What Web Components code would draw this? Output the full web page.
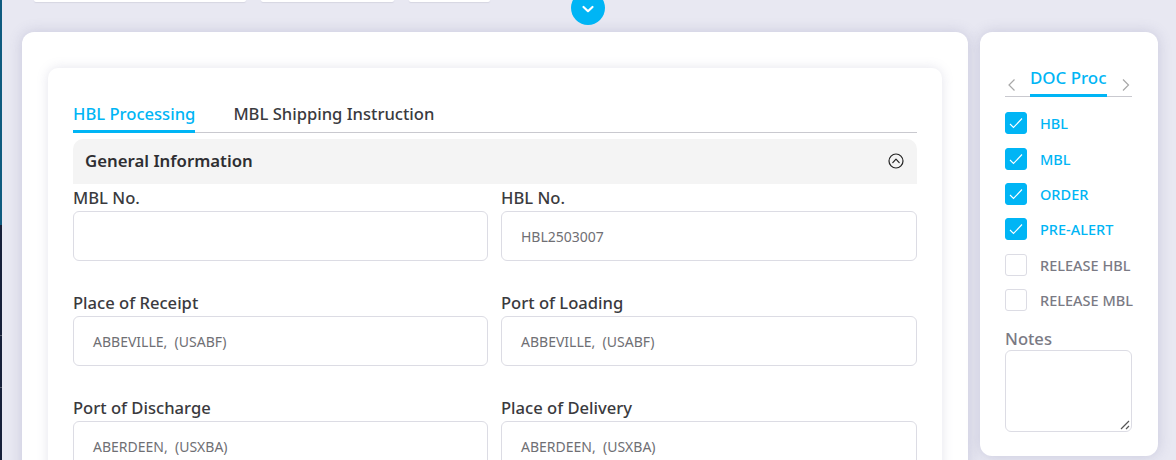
<!DOCTYPE html>
<html><head><meta charset="utf-8">
<style>
html,body{margin:0;height:460px;overflow:hidden;background:#e8e8f2;}
body{font-family:"Noto Sans","Open Sans",sans-serif;}
app-shell{display:block;}
</style></head><body>
<app-shell>
  <top-bar slot="top"></top-bar>
  <main-card slot="main">
    <tab-strip></tab-strip>
    <section-head>General Information</section-head>
    <field-grid>
      <form-field label="MBL No."></form-field>
      <form-field label="HBL No." value="HBL2503007"></form-field>
      <form-field label="Place of Receipt" value="ABBEVILLE,  (USABF)"></form-field>
      <form-field label="Port of Loading" value="ABBEVILLE,  (USABF)"></form-field>
      <form-field label="Port of Discharge" value="ABERDEEN,  (USXBA)"></form-field>
      <form-field label="Place of Delivery" value="ABERDEEN,  (USXBA)"></form-field>
    </field-grid>
  </main-card>
  <side-card slot="side">
    <check-row checked>HBL</check-row>
    <check-row checked>MBL</check-row>
    <check-row checked>ORDER</check-row>
    <check-row checked>PRE-ALERT</check-row>
    <check-row>RELEASE HBL</check-row>
    <check-row>RELEASE MBL</check-row>
  </side-card>
</app-shell>
<script>
function def(name,html,init){
  customElements.define(name,class extends HTMLElement{
    constructor(){super();this.attachShadow({mode:'open'}).innerHTML=html;}
    connectedCallback(){if(init)init(this);}
  });
}
def('app-shell',`<style>
:host{display:block;height:460px;overflow:hidden;position:relative;}
.strip{position:absolute;left:0;top:0;bottom:0;width:2px;background:linear-gradient(#0f5b80 0,#0f5b80 225px,#16203a 225px,#16203a 335px,#555a6a 335px,#555a6a 336px,#16203a 336px,#16203a 387px,#555a6a 387px,#555a6a 388px,#16203a 388px);}
.row{display:flex;gap:12px;padding:0 18px 0 22px;align-items:flex-start;}
</style>
<div class="strip"></div>
<slot name="top"></slot>
<div class="row"><slot name="main"></slot><slot name="side"></slot></div>`);
def('top-bar',`<style>
:host{display:flex;height:32px;padding-left:34px;gap:15px;position:relative;}
i{display:block;height:2px;background:#fff;border-radius:0 0 4px 4px;box-shadow:0 1px 1px #d6d6e2;}
.go{position:absolute;left:571px;top:-9px;width:34px;height:34px;border-radius:50%;background:#00b5f5;display:flex;align-items:center;justify-content:center;}
</style>
<i style="width:212px"></i><i style="width:133px"></i><i style="width:81px"></i>
<div class="go"><svg width="14" height="10" viewBox="0 0 14 10" fill="none" stroke="#fff" stroke-width="2.2" stroke-linecap="round" stroke-linejoin="round" style="margin-top:1px"><path d="M2.5 3 7 7.2 11.5 3"/></svg></div>`);
def('main-card',`<style>
:host{display:block;box-sizing:border-box;width:946px;height:600px;flex:none;background:#fff;border-radius:12px;padding:36px 26px;box-shadow:0 0 14px rgba(100,100,150,.24);}
.in{background:#fff;border-radius:10px;padding:26px 25px;box-shadow:0 0 12px rgba(120,120,160,.2);height:500px;}
</style><div class="in"><slot></slot></div>`);
def('tab-strip',`<style>
:host{display:flex;gap:38px;height:39px;border-bottom:1px solid #c9c9cf;box-sizing:border-box;font-size:16.6px;font-weight:500;color:#3a3a3e;}
span{height:39px;box-sizing:border-box;padding-top:8px;line-height:24px;}
.a{color:#00b5f5;border-bottom:3px solid #00b5f5;}
</style><span class="a">HBL Processing</span><span>MBL Shipping Instruction</span>`);
def('section-head',`<style>
:host{display:flex;justify-content:space-between;align-items:center;height:45px;box-sizing:border-box;margin-top:6px;padding:0 13px 2px 12px;background:#f4f4f4;border-radius:10px 10px 0 0;font-size:16.8px;font-weight:600;color:#2e2e32;}
svg{margin-top:1px;}
</style><slot></slot><svg width="16" height="16" viewBox="0 0 16 16" fill="none" stroke="#222" stroke-width="1.2"><circle cx="8" cy="8" r="7"/><path d="M4.8 9.6 8 6.2l3.2 3.4" stroke-linecap="round" stroke-linejoin="round"/></svg>`);
def('field-grid',`<style>
:host{display:grid;grid-template-columns:415px 416px;column-gap:13px;row-gap:28px;}
</style><slot></slot>`);
def('form-field',`<style>
:host{display:block;}
label{display:block;font-size:16.6px;font-weight:500;color:#3a3a3e;line-height:27px;height:27px;}
.box{box-sizing:border-box;height:50px;border:1px solid #dcdce4;border-radius:6px;padding:0 19px;line-height:50px;font-size:14px;color:#6f6f74;white-space:pre;}
</style><label></label><div class="box"></div>`,el=>{
  el.shadowRoot.querySelector('label').textContent=el.getAttribute('label');
  el.shadowRoot.querySelector('.box').textContent=el.getAttribute('value')||'';
});
def('side-card',`<style>
:host{display:block;box-sizing:border-box;width:178px;height:424px;flex:none;background:#fff;border-radius:12px;padding:36px 26px 0 25px;box-shadow:0 0 14px rgba(100,100,150,.24);}
.tabs{display:flex;justify-content:space-between;height:29px;border-bottom:1px solid #c9c9cf;box-sizing:border-box;margin-bottom:8.6px;}
.t{height:29px;box-sizing:border-box;width:77px;border-bottom:3px solid #00b5f5;color:#00b5f5;font-size:16.9px;font-weight:500;line-height:20px;white-space:nowrap;}
svg{margin-top:10px;}
.n{font-size:16.6px;font-weight:500;color:#7a7a84;line-height:24px;height:23px;margin-top:9.4px;}
.ta{box-sizing:border-box;height:82px;border:1px solid #dcdce4;border-radius:6px;position:relative;}
.ta svg{position:absolute;right:1px;bottom:1px;margin:0;}
</style>
<div class="tabs">
<svg width="12" height="14" viewBox="0 0 12 14" fill="none" stroke="#a8a8a8" stroke-width="1.2"><path d="M9.5 1.5 4 7l5.5 5.5"/></svg>
<div class="t">DOC Proc</div>
<svg width="12" height="14" viewBox="0 0 12 14" fill="none" stroke="#a8a8a8" stroke-width="1.2"><path d="M3 1.5 8.5 7 3 12.5"/></svg>
</div>
<slot></slot>
<div class="n">Notes</div>
<div class="ta"><svg width="10" height="10" viewBox="0 0 10 10" stroke="#555" stroke-width="1.2" fill="none"><path d="M1 9 9 1M6 9 9 6"/></svg></div>`);
def('check-row',`<style>
:host{display:flex;align-items:center;gap:13px;height:35.4px;font-size:14.5px;font-weight:500;color:#7a7a84;white-space:nowrap;}
:host([checked]){color:#00b5f5;}
.b{box-sizing:border-box;width:22px;height:22px;border-radius:3px;border:1px solid #dcdce4;background:#fff;display:flex;align-items:center;justify-content:center;flex:none;}
:host([checked]) .b{background:#00b5f5;border-color:#00b5f5;}
svg{display:none;}
:host([checked]) svg{display:block;}
</style><div class="b"><svg width="14" height="12" viewBox="0 0 14 12" fill="none" stroke="#fff" stroke-width="1.1"><path d="M1 7l3.5 3.5L13 1.5"/></svg></div><slot></slot>`);
</script>
</body></html>
